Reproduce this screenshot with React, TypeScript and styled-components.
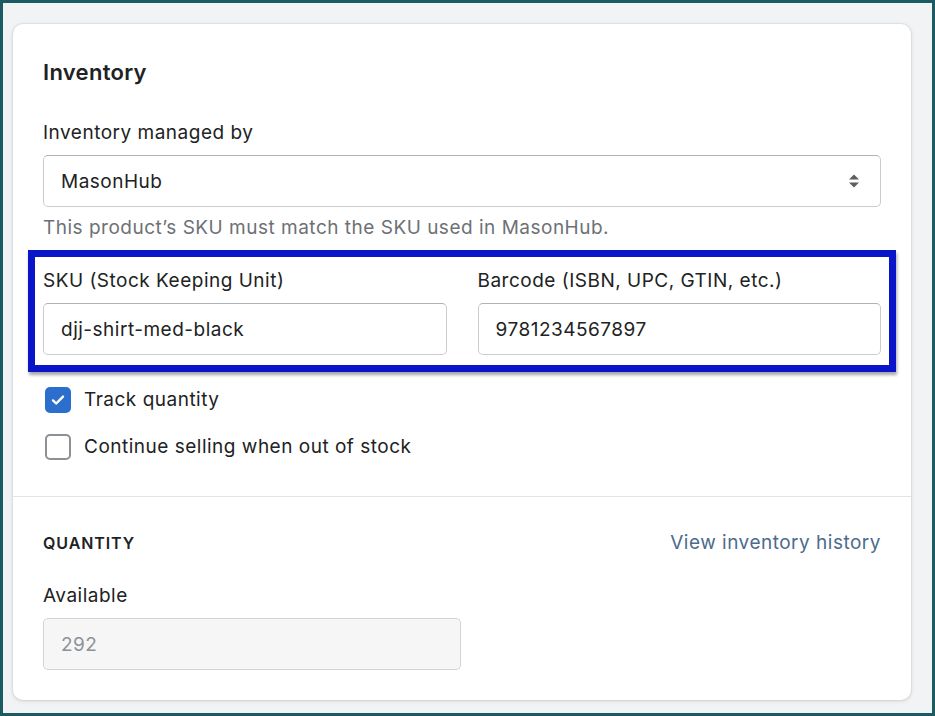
import styled, { createGlobalStyle } from 'styled-components';

const GlobalStyle = createGlobalStyle`
  html, body {
    margin: 0;
    padding: 0;
  }
  body {
    font-family: Inter, 'Noto Sans', 'Liberation Sans', sans-serif;
    color: #202223;
    -webkit-font-smoothing: antialiased;
  }
  * {
    box-sizing: border-box;
  }
`;

const StyledFrame = styled.div`
  width: 935px;
  height: 716px;
  border: 3px solid #1d5b62;
  background: #f2f3f4;
  padding: 21px 21px 13px 10px;
`;

const StyledCard = styled.section`
  background: #ffffff;
  border-radius: 10px;
  box-shadow: 0 0 0 1px rgba(63, 63, 68, 0.06), 0 1px 4px rgba(63, 63, 68, 0.16);
  overflow: hidden;
`;

const StyledSection = styled.div<{ $top: number; $bottom: number }>`
  padding: ${(p) => p.$top}px 30px ${(p) => p.$bottom}px;
  & + & {
    border-top: 1px solid #e1e3e5;
  }
`;

const StyledTitle = styled.h2`
  margin: 0 0 35px;
  font-size: 22px;
  line-height: 28px;
  font-weight: 600;
  letter-spacing: 0.3px;
`;

const StyledLabel = styled.label`
  display: block;
  font-size: 19px;
  line-height: 24px;
  letter-spacing: 0.5px;
  margin-bottom: 10px;
  color: #202223;
`;

const StyledField = styled.div`
  display: flex;
  flex-direction: column;
`;

const StyledBox = styled.div<{ $disabled?: boolean }>`
  position: relative;
  height: 52px;
  border: 1px solid ${(p) => (p.$disabled ? '#d2d5d8' : '#c9cccf')};
  border-top-color: ${(p) => (p.$disabled ? '#d2d5d8' : '#aeb4b9')};
  border-radius: 5px;
  background: ${(p) => (p.$disabled ? '#f6f6f7' : '#ffffff')};
  display: flex;
  align-items: center;
  padding: 0 17px;
  font-size: 19px;
  letter-spacing: 0.5px;
  color: ${(p) => (p.$disabled ? '#8c9196' : '#202223')};
`;

const StyledArrows = styled.svg`
  position: absolute;
  right: 20px;
  top: 50%;
  transform: translateY(-50%);
`;

const StyledHelp = styled.p`
  margin: 9px 0 0;
  font-size: 19px;
  line-height: 24px;
  letter-spacing: 0.5px;
  color: #6d7175;
`;

const StyledHighlight = styled.div`
  margin: 10px -15px 0;
  border: 7px solid #0a14c8;
  box-shadow: 1px 3px 3px rgba(0, 0, 0, 0.35);
  padding: 12px 8px 10px;
  display: grid;
  grid-template-columns: 1fr 1fr;
  gap: 31px;
`;

const StyledChecks = styled.div`
  margin-top: 15px;
  display: flex;
  flex-direction: column;
  gap: 21px;
`;

const StyledCheckRow = styled.label`
  display: flex;
  align-items: center;
  gap: 13px;
  padding-left: 2px;
  font-size: 19px;
  line-height: 26px;
  letter-spacing: 0.5px;
  color: #202223;
`;

const StyledCheckbox = styled.span<{ $checked: boolean }>`
  width: 26px;
  height: 26px;
  border-radius: 5px;
  flex-shrink: 0;
  display: flex;
  align-items: center;
  justify-content: center;
  background: ${(p) => (p.$checked ? '#2c6ecb' : '#ffffff')};
  border: 2px solid ${(p) => (p.$checked ? '#2c6ecb' : '#8c9196')};
`;

const StyledHeadingRow = styled.div`
  display: flex;
  justify-content: space-between;
  align-items: center;
  margin-bottom: 29px;
`;

const StyledSubheading = styled.h3`
  margin: 0;
  font-size: 16px;
  line-height: 24px;
  font-weight: 600;
  letter-spacing: 0.9px;
  text-transform: uppercase;
`;

const StyledLink = styled.a`
  font-size: 19px;
  line-height: 24px;
  letter-spacing: 0.5px;
  color: #4c6b8b;
  text-decoration: none;
`;

const StyledHalf = styled.div`
  width: 418px;
`;

const Checkbox = ({ checked, children }: { checked: boolean; children: React.ReactNode }) => (
  <StyledCheckRow>
    <StyledCheckbox $checked={checked}>
      {checked && (
        <svg width="16" height="16" viewBox="0 0 16 16">
          <path
            d="M3 8.4l3.2 3.1L13 4.6"
            fill="none"
            stroke="#ffffff"
            strokeWidth="2.4"
            strokeLinecap="round"
            strokeLinejoin="round"
          />
        </svg>
      )}
    </StyledCheckbox>
    {children}
  </StyledCheckRow>
);

const App = () => {
  return (
    <>
      <GlobalStyle />
      <StyledFrame>
        <StyledCard>
          <StyledSection $top={34} $bottom={36}>
            <StyledTitle>Inventory</StyledTitle>
            <StyledField>
              <StyledLabel>Inventory managed by</StyledLabel>
              <StyledBox>
                MasonHub
                <StyledArrows width="12" height="14" viewBox="0 0 12 14">
                  <path d="M6 0.5L11 5.5H1z" fill="#5c5f62" />
                  <path d="M6 13.5L1 8.5h10z" fill="#5c5f62" />
                </StyledArrows>
              </StyledBox>
            </StyledField>
            <StyledHelp>This product’s SKU must match the SKU used in MasonHub.</StyledHelp>
            <StyledHighlight>
              <StyledField>
                <StyledLabel>SKU (Stock Keeping Unit)</StyledLabel>
                <StyledBox>djj-shirt-med-black</StyledBox>
              </StyledField>
              <StyledField>
                <StyledLabel>Barcode (ISBN, UPC, GTIN, etc.)</StyledLabel>
                <StyledBox>9781234567897</StyledBox>
              </StyledField>
            </StyledHighlight>
            <StyledChecks>
              <Checkbox checked>Track quantity</Checkbox>
              <Checkbox checked={false}>Continue selling when out of stock</Checkbox>
            </StyledChecks>
          </StyledSection>
          <StyledSection $top={34} $bottom={30}>
            <StyledHeadingRow>
              <StyledSubheading>Quantity</StyledSubheading>
              <StyledLink href="#">View inventory history</StyledLink>
            </StyledHeadingRow>
            <StyledHalf>
              <StyledLabel>Available</StyledLabel>
              <StyledBox $disabled>292</StyledBox>
            </StyledHalf>
          </StyledSection>
        </StyledCard>
      </StyledFrame>
    </>
  );
};

export default App;
